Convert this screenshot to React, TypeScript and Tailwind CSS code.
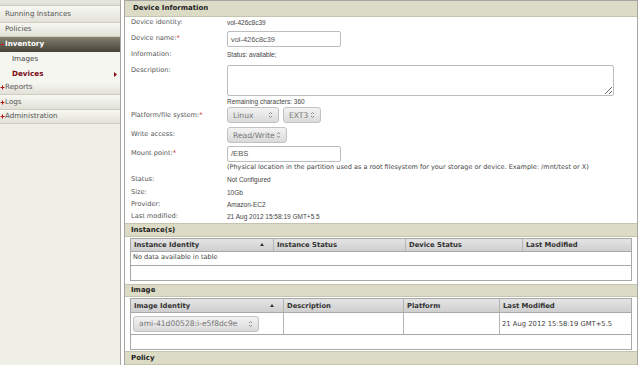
import type { ReactNode } from 'react'

const LABEL = "font-['DejaVu_Sans',sans-serif] text-[6.6px] text-[#555]"
const VALUE = "font-['Liberation_Sans',Arial,sans-serif] text-[6.5px] text-[#444]"
const BAND =
  "h-[14px] flex items-center px-[6px] bg-[#dcdcc6] border-y border-[#c4c4b0] font-['DejaVu_Sans',sans-serif] font-bold text-[7px] text-[#222]"
const TH =
  "flex items-center px-[3px] bg-gradient-to-b from-[#e4e4e4] to-[#cfcfcf] border-r border-[#b5b5b5] font-['DejaVu_Sans',sans-serif] font-bold text-[6.8px] text-[#333]"

function Updown() {
  return (
    <svg width="5" height="8" viewBox="0 0 5 8" className="ml-auto">
      <path d="M1 3 L2.5 1.5 L4 3" fill="none" stroke="#777" strokeWidth="0.8" />
      <path d="M1 5 L2.5 6.5 L4 5" fill="none" stroke="#777" strokeWidth="0.8" />
    </svg>
  )
}

function Select({ w, children }: { w: string; children: ReactNode }) {
  return (
    <div
      className={`${w} h-[16px] flex items-center px-[5px] rounded-[3px] border border-[#c2c2c2] bg-gradient-to-b from-[#f3f3f3] to-[#dadada] font-['DejaVu_Sans',sans-serif] text-[7.6px] text-[#777]`}
    >
      <span>{children}</span>
      <Updown />
    </div>
  )
}

function Row({ h, label, req, children, top }: { h: string; label: string; req?: boolean; children?: ReactNode; top?: boolean }) {
  return (
    <div className={`${h} flex ${top ? 'items-start' : 'items-center'}`}>
      <div className={`w-[102px] shrink-0 pl-[6px] ${LABEL} ${top ? 'pt-[4px]' : ''}`}>
        {label}
        {req && <span className="text-[#d03030]">*</span>}
      </div>
      <div className="flex-1 flex items-center">{children}</div>
    </div>
  )
}

function SortUp() {
  return (
    <svg width="4" height="3" viewBox="0 0 4 3" className="ml-auto mr-[6px]">
      <path d="M0 3 L2 0 L4 3 Z" fill="#333" />
    </svg>
  )
}

function SideItem({ children, h, dark, sub, bullet }: { children: ReactNode; h: string; dark?: boolean; sub?: boolean; bullet?: '+' | '-' }) {
  const bg = dark
    ? 'bg-gradient-to-b from-[#86826f] to-[#45433a] text-white font-bold'
    : sub
      ? 'bg-[#f6f6f1] text-[#444]'
      : 'bg-gradient-to-b from-[#f8f8f3] to-[#e2e2d8] border-b border-[#cdcdc0] text-[#555]'
  return (
    <div className={`${h} flex items-center ${bg} font-['DejaVu_Sans',sans-serif] text-[7.2px] ${bullet ? '' : sub ? 'pl-[12px]' : 'pl-[5px]'}`}>
      {bullet === '+' && (
        <svg width="5" height="5" viewBox="0 0 5 5">
          <path d="M0.5 2.5 H4.5 M2.5 0.5 V4.5" stroke="#b01818" strokeWidth="1.1" />
        </svg>
      )}
      {bullet === '-' && (
        <svg width="5" height="5" viewBox="0 0 5 5">
          <path d="M0.5 2.5 H4.5" stroke="#d02020" strokeWidth="1.1" />
        </svg>
      )}
      {children}
    </div>
  )
}

export default function App() {
  return (
    <div className="w-[640px] h-[365px] overflow-hidden bg-white flex">
      <aside className="w-[121px] h-full shrink-0 bg-[#efefe8] border-r border-[#a8a8a0] flex flex-col">
        <div className="h-[6px] bg-gradient-to-b from-[#e9e9e0] to-[#dedfd4] border-b border-[#cdcdc0]" />
        <SideItem h="h-[17px]">Running Instances</SideItem>
        <SideItem h="h-[14px]">Policies</SideItem>
        <SideItem h="h-[15px]" dark bullet="-">Inventory</SideItem>
        <SideItem h="h-[15px]" sub>Images</SideItem>
        <div className="h-[14px] flex items-center pl-[12px] pr-[3px] bg-[#f6f6f1] font-['DejaVu_Sans',sans-serif] text-[7.2px] font-bold text-[#7a0a14]">
          Devices
          <svg width="3" height="5" viewBox="0 0 3 5" className="ml-auto">
            <path d="M0 0 L3 2.5 L0 5 Z" fill="#8a0a14" />
          </svg>
        </div>
        <SideItem h="h-[14px]" bullet="+">Reports</SideItem>
        <SideItem h="h-[15px]" bullet="+">Logs</SideItem>
        <SideItem h="h-[14px]" bullet="+">Administration</SideItem>
      </aside>

      <main className="w-[514px] ml-[3px] h-full border-x border-t border-[#a5a5a5] flex flex-col">
        <div className="h-[16px] shrink-0 flex items-center px-[8px] bg-[#dcdcc6] border-b border-[#c4c4b0] font-['DejaVu_Sans',sans-serif] font-bold text-[7px] text-[#222]">
          Device Information
        </div>

        <Row h="h-[13px]" label="Device identity:">
          <span className={VALUE}>vol-426c8c39</span>
        </Row>
        <Row h="h-[20px]" label="Device name:" req>
          <div className="w-[114px] h-[16px] flex items-center px-[3px] border border-[#bdbdbd] rounded-[2px] font-['Liberation_Sans',Arial,sans-serif] text-[7.4px] text-[#555]">
            vol-426c8c39
          </div>
        </Row>
        <Row h="h-[13px]" label="Information:">
          <span className={VALUE}>Status: available;</span>
        </Row>
        <Row h="h-[36px]" label="Description:" top>
          <textarea
            readOnly
            className="mt-[3px] w-[387px] h-[31px] border border-[#bdbdbd] rounded-[2px] outline-none"
          />
        </Row>
        <Row h="h-[10px]" label="">
          <span className={VALUE}>Remaining characters: 360</span>
        </Row>
        <Row h="h-[19px]" label="Platform/file system:" req>
          <div className="flex gap-[4px]">
            <Select w="w-[52px]">Linux</Select>
            <Select w="w-[38px]">EXT3</Select>
          </div>
        </Row>
        <Row h="h-[22px]" label="Write access:">
          <Select w="w-[60px]">Read/Write</Select>
        </Row>
        <Row h="h-[16px]" label="Mount point:" req>
          <div className="w-[114px] h-[16px] flex items-center px-[3px] border border-[#bdbdbd] rounded-[2px] font-['Liberation_Sans',Arial,sans-serif] text-[7.6px] text-[#555]">
            /EBS
          </div>
        </Row>
        <Row h="h-[12px]" label="">
          <span className="font-['DejaVu_Sans',sans-serif] text-[6.5px] text-[#444] whitespace-nowrap">
            (Physical location in the partition used as a root filesystem for your storage or device. Example: /mnt/test or X)
          </span>
        </Row>
        <Row h="h-[13px]" label="Status:">
          <span className={VALUE}>Not Configured</span>
        </Row>
        <Row h="h-[13px]" label="Size:">
          <span className={VALUE}>10Gb</span>
        </Row>
        <Row h="h-[13px]" label="Provider:">
          <span className={VALUE}>Amazon-EC2</span>
        </Row>
        <Row h="h-[12px]" label="Last modified:">
          <span className={VALUE}>21 Aug 2012 15:58:19 GMT+5.5</span>
        </Row>

        <div className={BAND}>Instance(s)</div>
        <div className="mx-[5px] mt-[1px] border border-[#a8a8a8]">
          <div className="h-[13px] grid grid-cols-[143px_132px_117px_1fr] border-b border-[#a8a8a8]">
            <div className={TH}>
              Instance Identity
              <SortUp />
            </div>
            <div className={TH}>Instance Status</div>
            <div className={TH}>Device Status</div>
            <div className={`${TH} border-r-0`}>Last Modified</div>
          </div>
          <div className="h-[14px] flex items-center px-[2px] border-b border-[#a8a8a8] font-['DejaVu_Sans',sans-serif] text-[6.6px] text-[#444]">
            No data available in table
          </div>
          <div className="h-[14px]" />
        </div>

        <div className={`${BAND} mt-[3px]`}>Image</div>
        <div className="mx-[5px] mt-[1px] border border-[#a8a8a8]">
          <div className="h-[14px] grid grid-cols-[153px_120px_96px_1fr] border-b border-[#a8a8a8]">
            <div className={TH}>
              Image Identity
              <SortUp />
            </div>
            <div className={TH}>Description</div>
            <div className={TH}>Platform</div>
            <div className={`${TH} border-r-0`}>Last Modified</div>
          </div>
          <div className="h-[22px] grid grid-cols-[153px_120px_96px_1fr] border-b border-[#a8a8a8]">
            <div className="flex items-center px-[2px] border-r border-[#b5b5b5]">
              <Select w="w-[126px]">ami-41d00528:i-e5f8dc9e</Select>
            </div>
            <div className="border-r border-[#b5b5b5]" />
            <div className="border-r border-[#b5b5b5]" />
            <div className="flex items-center px-[2px] font-['DejaVu_Sans',sans-serif] text-[6.8px] text-[#444]">
              21 Aug 2012 15:58:19 GMT+5.5
            </div>
          </div>
          <div className="h-[14px]" />
        </div>

        <div className={`${BAND} mt-[1px]`}>Policy</div>
        <div className="flex-1" />
      </main>
    </div>
  )
}
